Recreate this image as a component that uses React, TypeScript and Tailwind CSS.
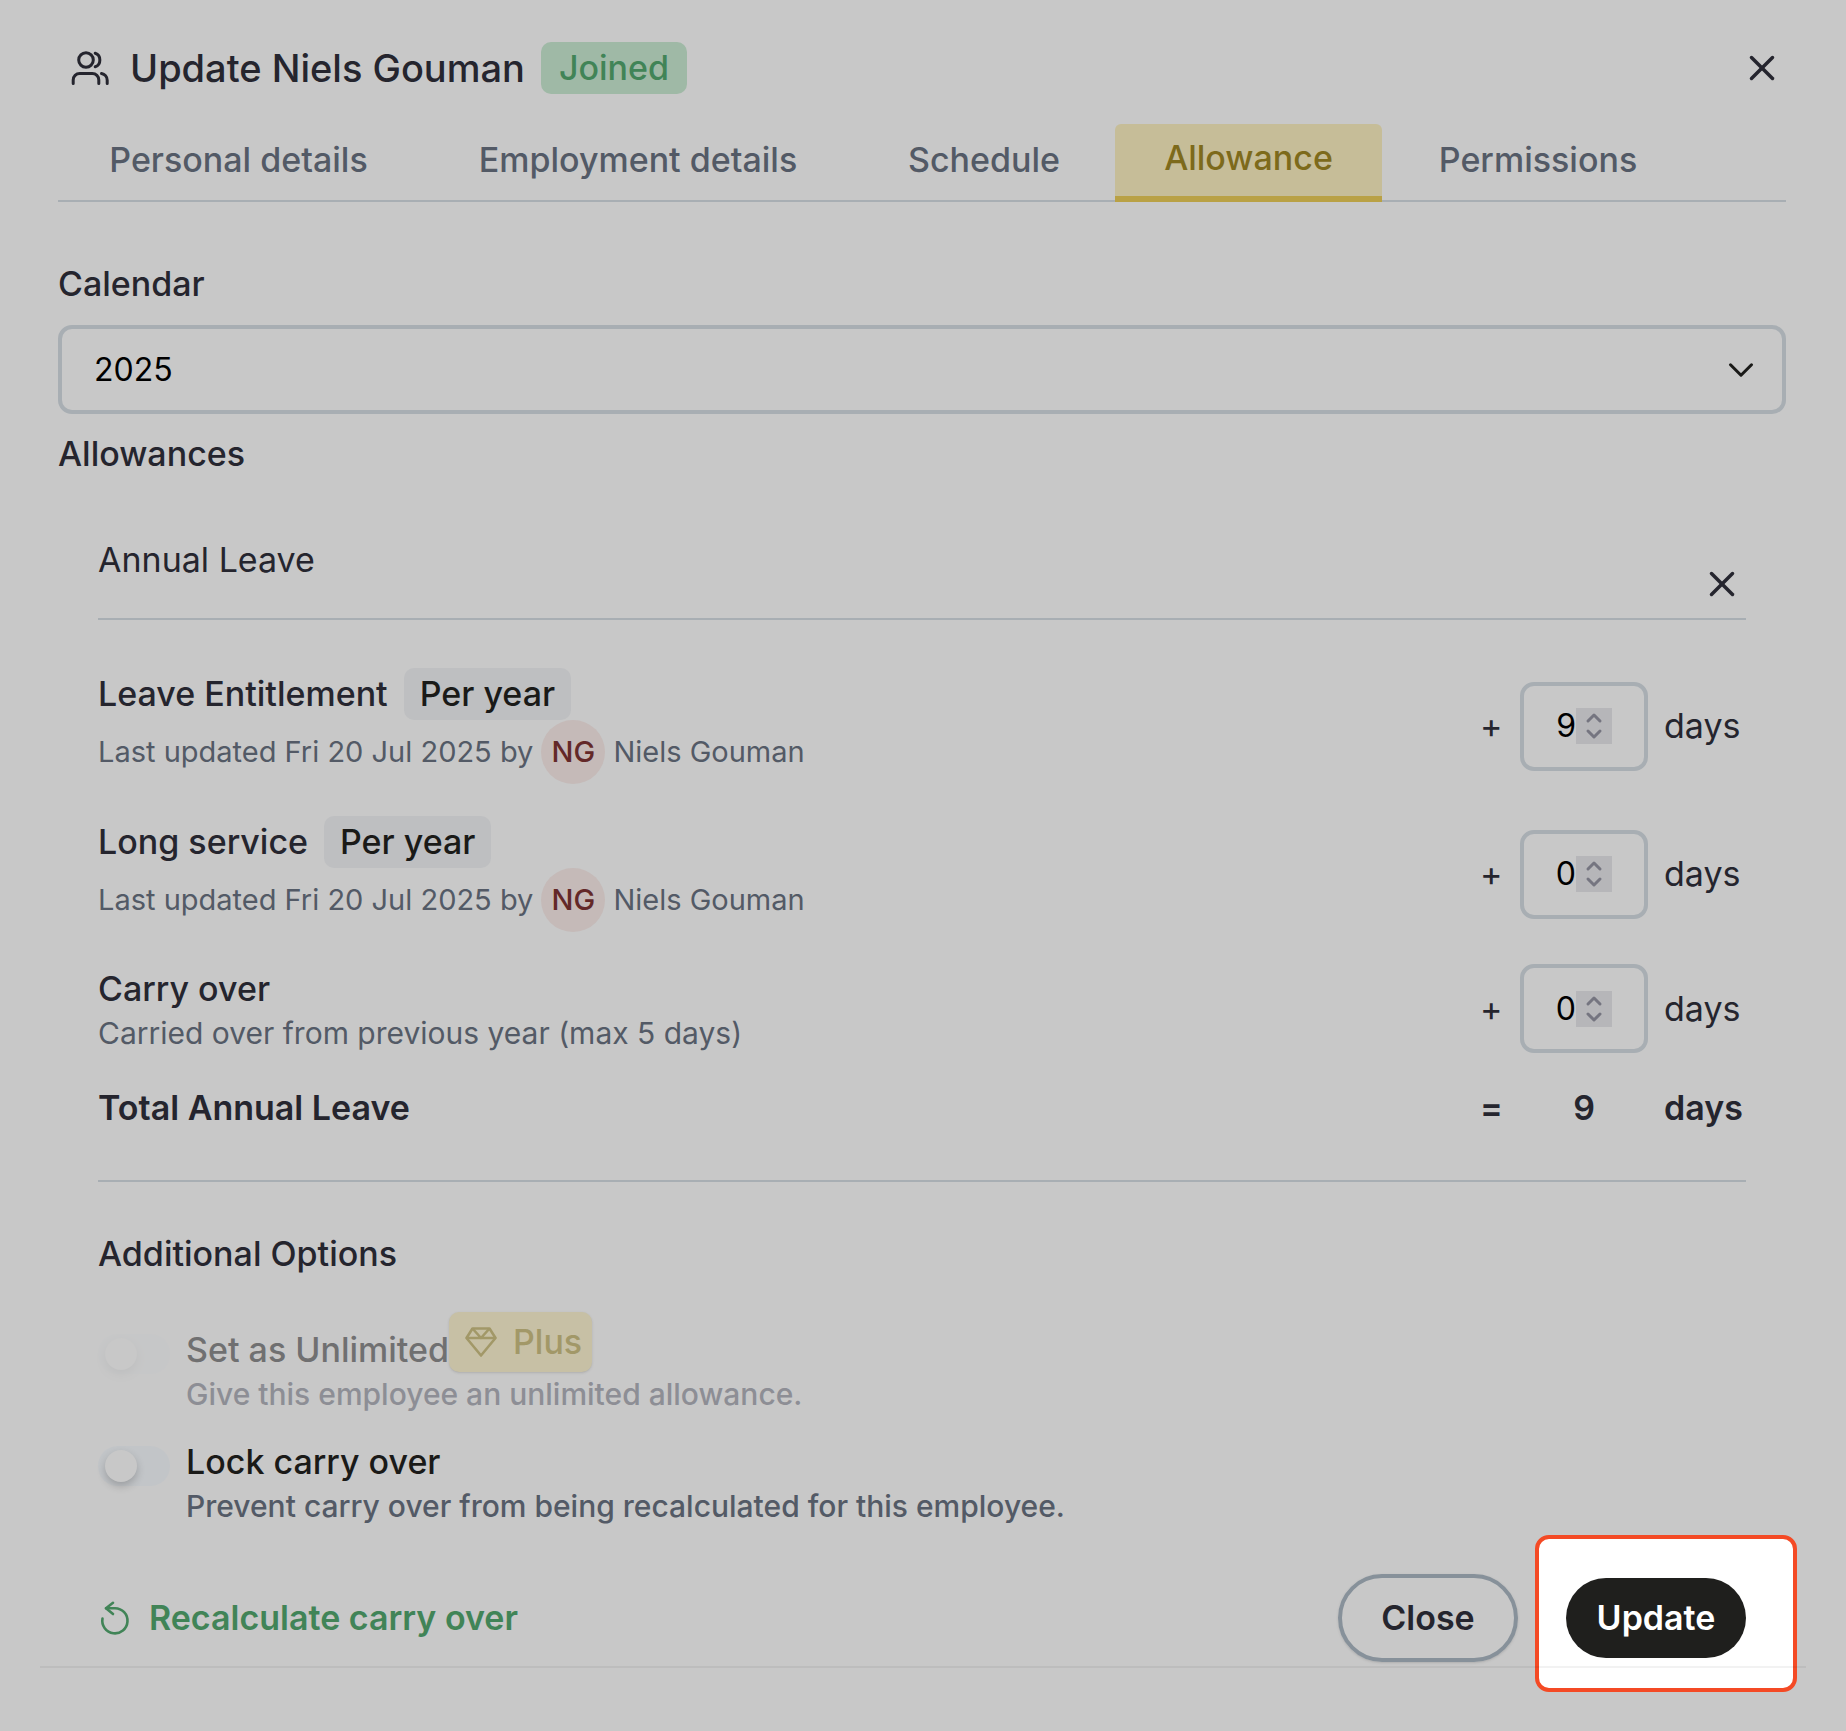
import { ReactNode } from 'react';
import { ChevronDown, ChevronUp, X } from 'lucide-react';
import { clsx } from 'clsx';

const tabs = [
  { label: 'Personal details', width: 'w-[361px]' },
  { label: 'Employment details', width: 'w-[430px]' },
  { label: 'Schedule', width: 'w-[254px]' },
  { label: 'Allowance', width: 'w-[267px]', active: true },
  { label: 'Permissions', width: 'w-[304px]' },
];

function UsersIcon() {
  return (
    <svg width="48" height="48" viewBox="0 0 48 48" fill="none" stroke="currentColor" strokeWidth="3" strokeLinecap="round" aria-hidden="true">
      <circle cx="20" cy="16" r="7.3" />
      <path d="M29.200 9.200c6.200 1.800 6.200 11.800 0 13.600" />
      <path d="M7.200 39.500V36a6.500 6.500 0 0 1 6.500-6.500h12.600a6.500 6.500 0 0 1 6.500 6.500v3.500" />
      <path d="M35.500 29.500c3.200.6 5.700 3.300 5.700 6.700v3.300" />
    </svg>
  );
}

function RestoreIcon() {
  return (
    <svg width="32" height="36" viewBox="0 0 32 36" fill="none" stroke="currentColor" strokeWidth="2.6" strokeLinecap="round" strokeLinejoin="round" aria-hidden="true">
      <path d="M3.500 18.500A12.600 12.600 0 1 0 16 8.200H7" />
      <path d="M14 2.800 7 8.200l7 5.800" />
    </svg>
  );
}

function GemIcon() {
  return (
    <svg width="32" height="30" viewBox="0 0 32 30" fill="none" stroke="currentColor" strokeWidth="2.6" strokeLinejoin="round" aria-hidden="true">
      <path d="M7.500 1.500h17l6 9.500L16 28.500 1.500 11z" />
      <path d="M1.500 11h29M7.500 1.500 16 11l8.500-9.500" />
    </svg>
  );
}

function Pill({ children }: { children: ReactNode }) {
  return (
    <span className="flex h-[52px] items-center rounded-[10px] bg-[#bebfc1] px-4 font-medium text-[#1a1a18]">
      {children}
    </span>
  );
}

interface AllowanceRowProps {
  id: string;
  label: string;
  value: number;
  perYear?: boolean;
  children: ReactNode;
}

function AllowanceRow({ id, label, value, perYear, children }: AllowanceRowProps) {
  return (
    <div className="flex items-center justify-between">
      <div>
        <div className="flex items-center gap-4">
          <label htmlFor={id} className="font-medium">{label}</label>
          {perYear && <Pill>Per year</Pill>}
        </div>
        {children}
      </div>
      <div className="flex items-center">
        <span className="w-10">+</span>
        <div className="flex h-[89px] w-32 items-center rounded-[14px] border-4 border-[#a8aeb3] text-[32px] text-black">
          <input
            id={id}
            type="number"
            defaultValue={value}
            className="w-[52px] appearance-none bg-transparent text-right outline-none [appearance:textfield] [&::-webkit-inner-spin-button]:appearance-none"
          />
          <span className="flex size-9 flex-col items-center justify-center bg-[#b6b6b9] text-[#757580]">
            <button type="button" aria-label={`Increase ${label}`} className="flex h-4 items-center">
              <ChevronUp size={24} strokeWidth={3} />
            </button>
            <button type="button" aria-label={`Decrease ${label}`} className="flex h-4 items-center">
              <ChevronDown size={24} strokeWidth={3} />
            </button>
          </span>
        </div>
        <span className="ml-4 w-[82px]">days</span>
      </div>
    </div>
  );
}

function UpdatedBy() {
  return (
    <div className="flex items-center gap-2 text-[29px] leading-[40px] text-[#535a66]">
      <span>Last updated Fri 20 Jul 2025 by</span>
      <span className="flex size-16 items-center justify-center rounded-full bg-[#c5bab8] font-medium text-[#632828]">NG</span>
      <span>Niels Gouman</span>
    </div>
  );
}

interface SwitchProps {
  id: string;
  disabled?: boolean;
}

function Switch({ id, disabled }: SwitchProps) {
  return (
    <input
      id={id}
      type="checkbox"
      role="switch"
      disabled={disabled}
      className={clsx(
        'flex h-10 w-[72px] shrink-0 appearance-none items-center rounded-full bg-[#c2c5c8] pl-[7px]',
        "before:size-8 before:rounded-full before:bg-[#c8c8c8] before:shadow-[0_4px_8px_rgba(0,0,0,0.2)] before:content-['']",
        disabled && 'opacity-20'
      )}
    />
  );
}

export default function App() {
  return (
    <main className="min-h-screen bg-[#c8c8c8] pt-[42px] font-[Inter,sans-serif] text-[34px] leading-[48px] text-[#25252e]">
      <div className="pr-[60px] pl-[58px]">
        <header className="flex h-[52px] items-center pr-[3px] pl-2">
          <UsersIcon />
          <h1 className="ml-4 text-[38px] font-medium">Update Niels Gouman</h1>
          <span className="ml-4 flex h-[52px] items-center rounded-[10px] bg-[#9fb9a6] px-[18px] font-medium text-[#418457]">Joined</span>
          <button type="button" aria-label="Close dialog" className="ml-auto">
            <X size={42} strokeWidth={2} />
          </button>
        </header>

        <nav className="mt-[30px] flex h-[78px] gap-1 border-b-2 border-[#a8aeb3]">
          {tabs.map((tab) => (
            <a
              key={tab.label}
              href="#"
              className={clsx(
                'flex items-center justify-center pb-1 font-medium',
                tab.width,
                tab.active
                  ? '-mb-0.5 rounded-t-md border-b-6 border-[#b9a145] bg-[#c6bd98] text-[#7d6a1b]'
                  : 'text-[#535a66]'
              )}
            >
              {tab.label}
            </a>
          ))}
        </nav>

        <label htmlFor="calendar" className="mt-[58px] block font-medium">Calendar</label>
        <div className="relative mt-[17px]">
          <select
            id="calendar"
            defaultValue="2025"
            className="block h-[89px] w-full appearance-none rounded-[14px] border-4 border-[#a8aeb3] px-8 text-[32px] text-black"
          >
            <option>2025</option>
          </select>
          <ChevronDown size={42} strokeWidth={1.75} className="pointer-events-none absolute top-6 right-6 text-[#1a1a18]" />
        </div>
        <h2 className="mt-4 font-medium">Allowances</h2>

        <section className="px-10">
          <div className="mt-[58px] flex h-[84px] justify-between border-b-2 border-[#a8aeb3] pr-[3px] pb-[13px]">
            <h3>Annual Leave</h3>
            <button type="button" aria-label="Remove Annual Leave" className="self-end">
              <X size={42} strokeWidth={2} />
            </button>
          </div>

          <div className="mt-12 flex flex-col gap-8">
            <AllowanceRow id="entitlement" label="Leave Entitlement" value={9} perYear>
              <UpdatedBy />
            </AllowanceRow>
            <AllowanceRow id="service" label="Long service" value={0} perYear>
              <UpdatedBy />
            </AllowanceRow>
            <AllowanceRow id="carry" label="Carry over" value={0}>
              <p className="text-[30px] leading-[40px] text-[#535a66]">Carried over from previous year (max 5 days)</p>
            </AllowanceRow>
          </div>

          {/* Total */}
          <div className="mt-[31px] flex border-b-2 border-[#a8aeb3] pb-12 font-semibold">
            <span className="grow">Total Annual Leave</span>
            <span className="w-10">=</span>
            <span className="w-32 text-center">9</span>
            <span className="ml-4 w-[82px]">days</span>
          </div>

          <h3 className="mt-12 font-medium">Additional Options</h3>

          <div className="mt-[34px] flex gap-4 font-medium">
            <div className="pt-[22px]">
              <Switch id="unlimited" disabled />
            </div>
            <div>
              <div className="flex items-end text-[#707071]">
                <label htmlFor="unlimited">Set as Unlimited</label>
                <span className="mb-0.5 flex h-[60px] items-center gap-4 rounded-[10px] bg-[#c7c0a5] pr-2.5 pl-4 text-[#a29868] shadow-sm">
                  <GemIcon />
                  Plus
                </span>
              </div>
              <p className="text-[30px] leading-[40px] text-[#8d8e95]">Give this employee an unlimited allowance.</p>
            </div>
          </div>

          <div className="mt-6 flex gap-4 font-medium">
            <div className="pt-2">
              <Switch id="lock" />
            </div>
            <div>
              <label htmlFor="lock" className="block text-[#1a1a18]">Lock carry over</label>
              <p className="text-[30px] leading-[40px] text-[#535a66]">Prevent carry over from being recalculated for this employee.</p>
            </div>
          </div>
        </section>
      </div>

      <footer className="mt-12 px-10">
        <div className="flex items-center pr-[60px] pb-1 pl-[59px] font-semibold">
          <button type="button" className="flex items-center gap-[18px] text-[#418457]">
            <RestoreIcon />
            Recalculate carry over
          </button>
          <button type="button" className="mr-12 ml-auto h-[88px] w-[180px] rounded-full border-4 border-[#87919a] shadow-sm">
            Close
          </button>
          {/* Highlighted primary action */}
          <div className="relative">
            <span className="absolute -top-[43px] -right-[51px] -bottom-[34px] -left-[31px] rounded-[14px] border-4 border-[#f44a25] bg-white" />
            <button type="button" className="relative h-20 w-[180px] rounded-full bg-[#1f1f1d] text-white">
              Update
            </button>
          </div>
        </div>
        <hr className="relative border-t-2 border-black/5" />
      </footer>
    </main>
  );
}
